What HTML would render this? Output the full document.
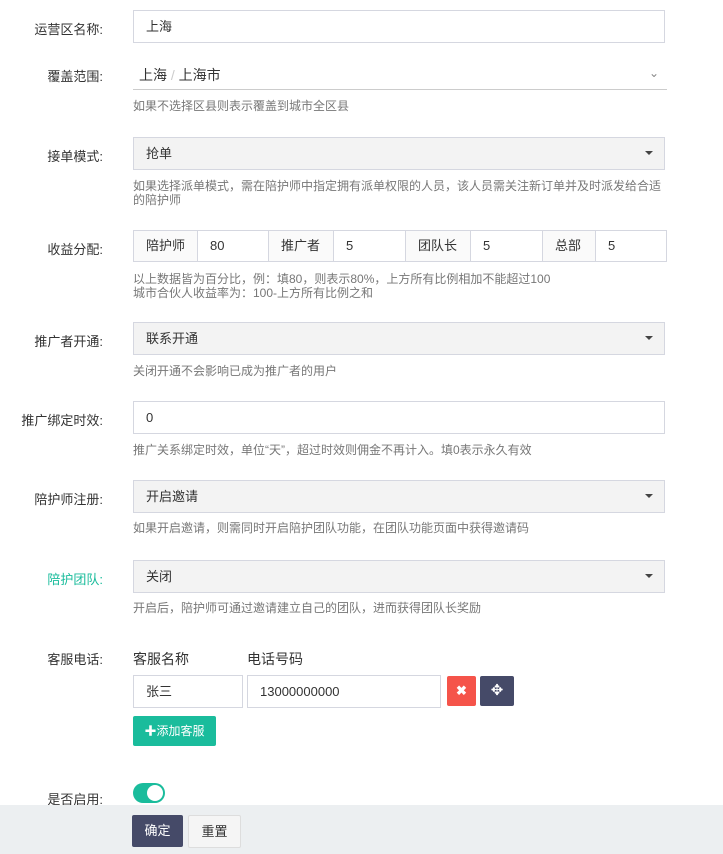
<!DOCTYPE html><html><head><meta charset="utf-8"><style>
body{margin:0;width:723px;height:854px;position:relative;overflow:hidden;background:#fff;font-family:"Liberation Sans","Noto Sans CJK SC",sans-serif;font-size:13px;color:#333}
.a{position:absolute}
.lb{position:absolute;right:620px;text-align:right;white-space:nowrap}
.in{position:absolute;left:133px;width:532px;height:31px;border:1px solid #d5d7e0;box-sizing:border-box;line-height:29px;padding-left:12px;background:#fff}
.sel{background:#f3f3f3}
.sel:after{content:"";position:absolute;right:11px;top:13px;border:4px solid transparent;border-top:4px solid #444;border-bottom:0}
.h{position:absolute;left:133px;font-size:12px;color:#777;line-height:14px;width:535px}
.seg{position:absolute;top:230px;height:32px;border:1px solid #d5d7e0;box-sizing:border-box;line-height:30px;padding-left:12px}
.g{background:#fafafa}
</style></head><body>
<div class="lb" style="top:19px">运营区名称:</div>
<div class="in" style="top:10px;height:33px;line-height:31px">上海</div>
<div class="lb" style="top:66px">覆盖范围:</div>
<div class="a" style="left:139px;top:65px;font-size:14px">上海 <span style="color:#ccc">/</span> 上海市</div>
<div class="a" style="left:649px;top:66px;color:#888;font-size:12px">&#8964;</div>
<div class="a" style="left:133px;top:89px;width:534px;height:1px;background:#ccc"></div>
<div class="h" style="top:99px">如果不选择区县则表示覆盖到城市全区县</div>
<div class="lb" style="top:146px">接单模式:</div>
<div class="in sel" style="top:137px;height:33px;line-height:31px">抢单</div>
<div class="h" style="top:179px">如果选择派单模式，需在陪护师中指定拥有派单权限的人员，该人员需关注新订单并及时派发给合适的陪护师</div>
<div class="lb" style="top:239px">收益分配:</div>
<div class="seg g" style="left:133px;width:65px">陪护师</div>
<div class="seg" style="left:197px;width:72px;padding-left:12px">80</div>
<div class="seg g" style="left:268px;width:66px">推广者</div>
<div class="seg" style="left:333px;width:73px">5</div>
<div class="seg g" style="left:405px;width:66px">团队长</div>
<div class="seg" style="left:470px;width:73px">5</div>
<div class="seg g" style="left:542px;width:54px">总部</div>
<div class="seg" style="left:595px;width:72px">5</div>
<div class="h" style="top:272px">以上数据皆为百分比，例：填80，则表示80%，上方所有比例相加不能超过100<br>城市合伙人收益率为：100-上方所有比例之和</div>
<div class="lb" style="top:331px">推广者开通:</div>
<div class="in sel" style="top:322px;height:33px;line-height:31px">联系开通</div>
<div class="h" style="top:364px">关闭开通不会影响已成为推广者的用户</div>
<div class="lb" style="top:410px">推广绑定时效:</div>
<div class="in" style="top:401px;height:33px;line-height:31px">0</div>
<div class="h" style="top:443px">推广关系绑定时效，单位“天”，超过时效则佣金不再计入。填0表示永久有效</div>
<div class="lb" style="top:489px">陪护师注册:</div>
<div class="in sel" style="top:480px;height:33px;line-height:31px">开启邀请</div>
<div class="h" style="top:521px">如果开启邀请，则需同时开启陪护团队功能，在团队功能页面中获得邀请码</div>
<div class="lb" style="top:569px;color:#1abc9c">陪护团队:</div>
<div class="in sel" style="top:560px;height:33px;line-height:31px">关闭</div>
<div class="h" style="top:601px">开启后，陪护师可通过邀请建立自己的团队，进而获得团队长奖励</div>
<div class="lb" style="top:649px">客服电话:</div>
<div class="a" style="left:133px;top:649px;font-size:14px">客服名称</div>
<div class="a" style="left:247px;top:649px;font-size:14px">电话号码</div>
<div class="in" style="top:675px;width:110px;height:33px;line-height:31px">张三</div>
<div class="in" style="top:675px;left:247px;width:194px;height:33px;line-height:31px">13000000000</div>
<div class="a" style="left:447px;top:676px;width:29px;height:30px;background:#f5544a;border-radius:2px;color:#fff;text-align:center;line-height:30px;font-weight:bold;font-size:13px">✖</div>
<div class="a" style="left:480px;top:676px;width:34px;height:30px;background:#454a68;border-radius:2px;color:#fff;text-align:center;line-height:30px;font-size:15px">✥</div>
<div class="a" style="left:133px;top:716px;width:83px;height:30px;background:#1abc9c;border-radius:2px;color:#fff;text-align:center;line-height:30px;font-size:12px"><b>✚</b>添加客服</div>
<div class="lb" style="top:789px">是否启用:</div>
<div class="a" style="left:133px;top:783px;width:32px;height:20px;background:#1abc9c;border-radius:10px"><div class="a" style="left:14px;top:2px;width:16px;height:16px;background:#fff;border-radius:50%"></div></div>
<div class="a" style="left:0;top:805px;width:723px;height:49px;background:#eceff1"></div>
<div class="a" style="left:132px;top:815px;width:51px;height:32px;background:#454a68;border-radius:2px;color:#fff;text-align:center;line-height:32px">确定</div>
<div class="a" style="left:188px;top:815px;width:51px;height:31px;background:#f5f5f5;border:1px solid #ddd;border-radius:2px;text-align:center;line-height:31px">重置</div>
</body></html>
